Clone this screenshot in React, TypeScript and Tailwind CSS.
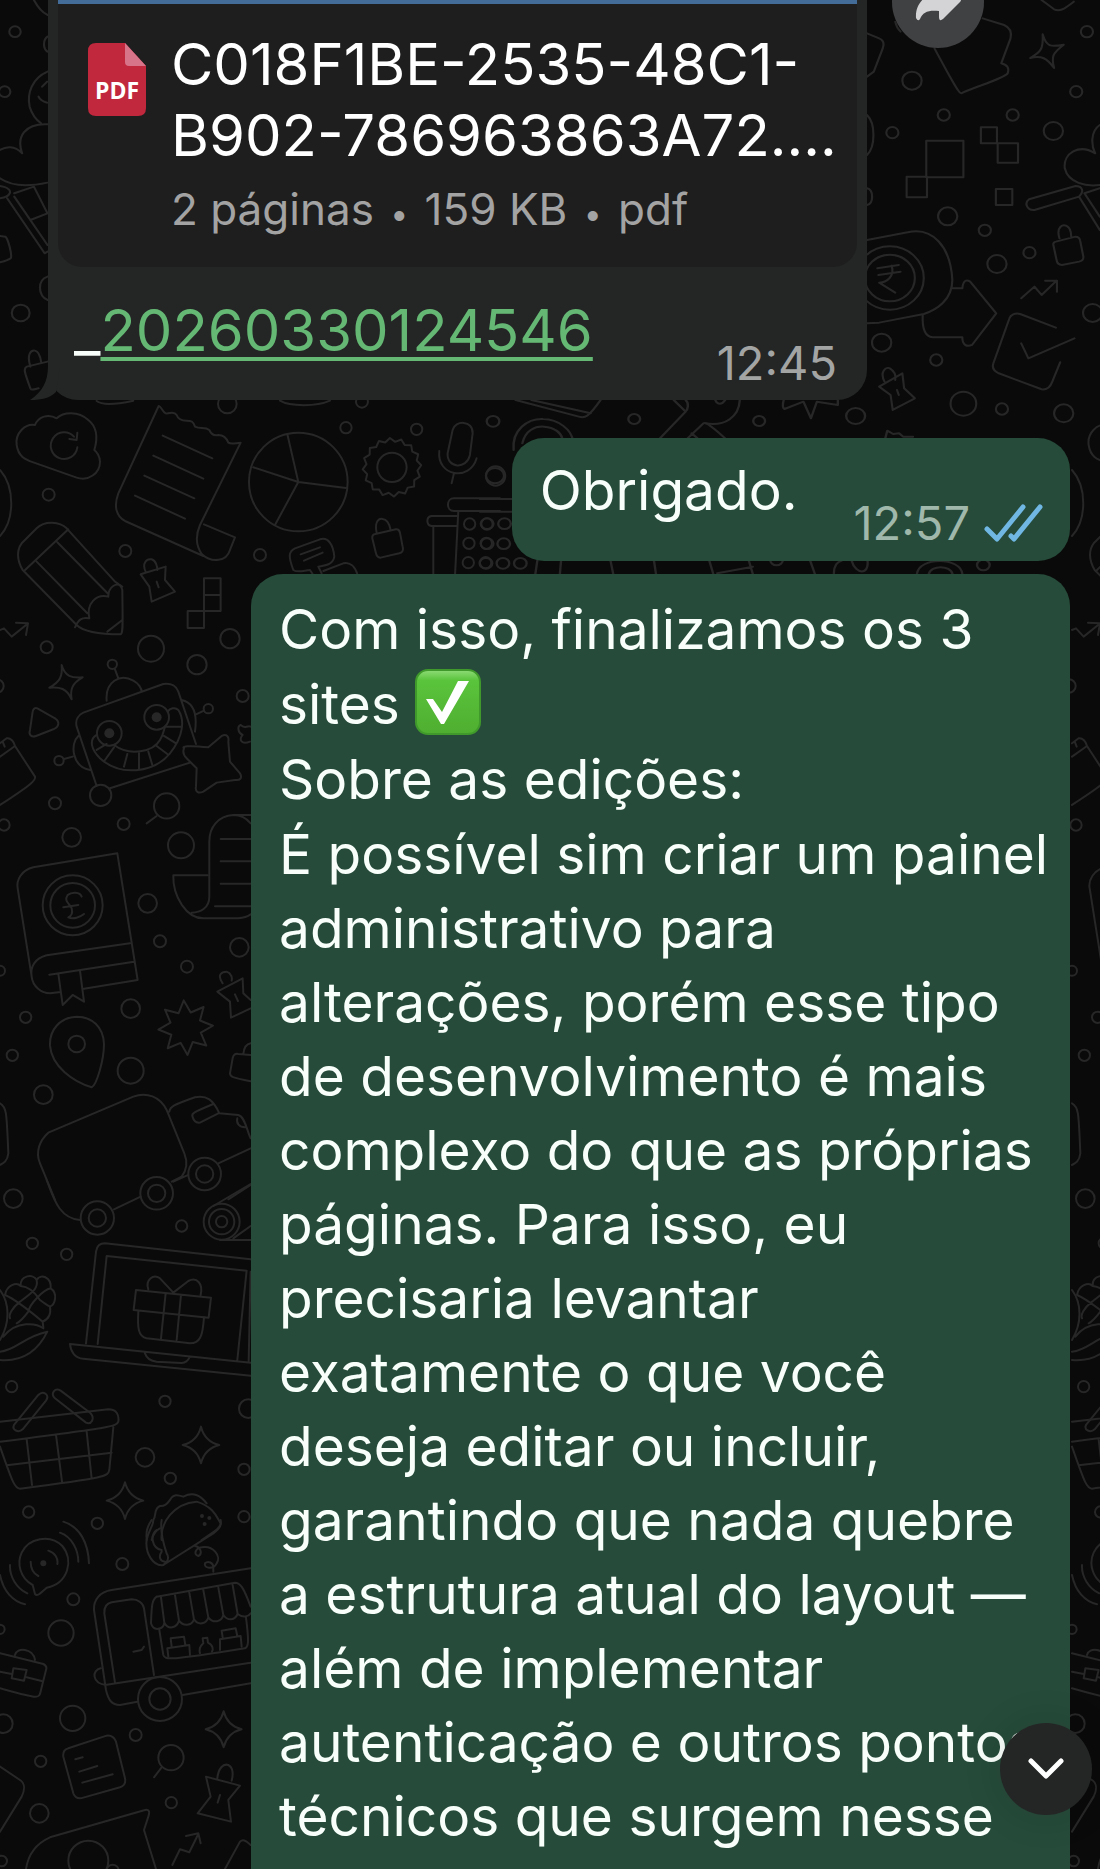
import * as React from 'react';

interface DoodleProps {
  x: number;
  y: number;
  sx: number;
  sy: number;
  circles: number[][];
  paths: string[];
  dots?: number[][];
}

const sparkle = (x: number, y: number, r: number) => {
  const k = r * 0.2;
  return `M${x} ${y - r}Q${x + k} ${y - k} ${x + r} ${y}Q${x + k} ${y + k} ${x} ${y + r}Q${x - k} ${y + k} ${x - r} ${y}Q${x - k} ${y - k} ${x} ${y - r}Z`;
};

const burst = (x: number, y: number, outer: number, inner: number, points: number) => {
  const list: string[] = [];
  for (let i = 0; i < points * 2; i++) {
    const r = i % 2 === 0 ? outer : inner;
    const a = (Math.PI * i) / points - Math.PI / 2 - 0.07;
    list.push(`${(x + r * Math.cos(a)).toFixed(1)} ${(y + r * Math.sin(a)).toFixed(1)}`);
  }
  return `M${list.join('L')}Z`;
};

// people, hearts and pencils next to the received message
const TOP_LEFT: DoodleProps = {
  x: 0,
  y: 0,
  sx: 0.357,
  sy: 0.3333,
  circles: [[42, 95, 16], [13, 275, 16], [58, 939, 25]],
  paths: [
    'M133 215C90 235 75 280 83 320C90 345 105 362 115 370M133 110C120 120 120 145 133 155M118 260L132 245M108 290C112 300 120 305 132 308',
    'M133 373C70 370 45 410 62 460C40 435 15 440 0 450M0 535C30 558 80 560 133 548',
    'M0 595C30 590 40 570 10 560L0 558M20 595L125 760L133 755M40 590L133 735M40 580L95 560L133 640M85 660L133 640',
    'M133 830C105 840 105 885 133 900M0 708L15 710C22 715 35 765 30 775C25 780 15 783 0 787',
    'M133 1085L75 1100C65 1105 68 1115 85 1165C88 1172 95 1168 108 1165M85 1100C75 1065 85 1050 98 1052C110 1055 113 1070 115 1085M95 0C105 20 115 35 133 45',
  ],
};

const TOP_RIGHT: DoodleProps = {
  x: 540,
  y: 0,
  sx: 0.357,
  sy: 0.3333,
  circles: [
    [987, 398, 17], [1042, 242, 27], [1131, 345, 17], [1324, 345, 17], [1438, 393, 27], [1142, 649, 27],
    [1246, 691, 17], [1280, 792, 27], [1371, 758, 17], [1532, 95, 17], [1502, 275, 17], [1548, 939, 27],
    [957, 1028, 27], [1110, 1080, 17], [1186, 1211, 36], [1294, 1227, 17], [1467, 1240, 27],
    [980, 834, 95], [980, 834, 70],
  ],
  paths: [
    'M1082 422H1186V532H1082ZM1235 382H1280V430H1235ZM1282 430H1339V488H1282ZM1027 530H1084V592H1027ZM1277 567H1323V615H1277Z',
    'M1240 55L1300 75C1315 82 1322 95 1318 115L1292 190C1310 195 1315 205 1310 220C1300 235 1220 260 1180 280C1175 280 1170 275 1105 145M995 65C998 80 1000 85 1010 95',
    'M1408 103C1418 140 1430 142 1467 134C1435 160 1432 170 1440 204C1420 175 1405 165 1373 174C1405 155 1410 145 1408 103Z',
    'M1405 0L1440 28C1455 35 1465 30 1495 5M916 100L950 115C962 120 965 130 960 145L935 215L916 230',
    'M916 345C940 370 940 440 916 465M916 565C935 570 935 610 916 615',
    'M916 720L1030 697C1100 680 1150 740 1155 840C1155 900 1110 930 1075 942L950 968L916 970',
    'M945 805L1005 795M948 825L1010 815M985 797C995 830 970 848 950 848L995 878',
    'M1155 865H1183C1185 840 1195 838 1205 845L1278 940L1210 1035C1195 1042 1183 1035 1183 1012H1100C1080 1010 1070 990 1072 945',
    'M1348 895L1385 860L1405 885L1447 842M1415 842H1448V875',
    'M1445 983L1345 942C1330 938 1318 945 1315 955L1270 1090C1265 1105 1275 1115 1285 1120L1405 1168C1420 1170 1430 1160 1435 1145L1457 1087M1348 1030L1368 1075L1497 1015',
    'M1455 715C1445 680 1465 672 1475 678C1488 685 1488 700 1488 710M1445 725L1500 710C1510 710 1512 715 1513 722L1522 770C1523 780 1518 783 1510 785L1462 795C1450 795 1448 788 1447 780L1438 735C1437 728 1440 726 1445 725Z',
    'M1370 598L1500 558C1520 558 1525 575 1510 590L1385 630C1365 632 1355 610 1370 598ZM1510 590L1568 690M1525 580L1568 650M1525 580L1568 565',
    'M1568 375C1540 395 1545 440 1555 460C1510 430 1465 460 1470 505C1480 550 1530 560 1568 555',
    'M965 1145C950 1115 970 1100 980 1105C995 1115 997 1130 995 1140M950 1160L1015 1120L1020 1165L1050 1195L988 1230L982 1185ZM1000 1170L1005 1185',
  ],
};

// strip between the received message and the replies
const GAP: DoodleProps = {
  x: 480,
  y: 390,
  sx: 0.3954,
  sy: 0.3333,
  circles: [
    [33, 94, 16], [390, 87, 15], [706, 93, 15], [950, 78, 24], [38, 257, 23], [18, 401, 16], [62, 401, 16],
    [18, 461, 16], [60, 461, 16], [15, 520, 16], [58, 520, 16], [102, 520, 16], [1273, 525, 16], [750, 510, 16],
  ],
  paths: [
    'M85 180C80 120 120 85 160 87C200 88 230 120 235 150M107 160C115 120 140 108 162 110C190 112 205 130 208 145',
    'M90 30L250 80C265 85 272 85 305 30M130 30L280 70M490 30L520 65L455 145M520 30C530 40 525 60 520 65M525 145L565 100C570 97 575 98 620 145M535 130L550 145',
    'M570 100C620 110 655 80 657 30M595 30C600 45 612 45 620 30M768 30C765 45 765 55 770 57L818 35L837 85L852 35L905 45V30M1025 145L1030 122L1045 132L1060 130L1070 140H1095',
    'M0 327H82M0 365H82M145 512L140 552M205 512L202 552M330 512L337 552M440 512L445 552M580 512L590 552M690 552L680 512M600 550L690 530M835 512L847 552M895 550C895 525 905 515 915 512M940 512C950 555 985 555 980 512M1105 552C1110 500 1215 500 1220 552M1135 552C1140 525 1190 525 1195 552',
  ],
};

const ROBOT: DoodleProps = {
  x: 0,
  y: 390,
  sx: 0.3333,
  sy: 0.3333,
  circles: [
    [146, 314, 18], [376, 483, 18], [780, 495, 18], [140, 772, 18], [453, 776, 39], [690, 746, 29], [591, 824, 29],
    [728, 918, 18], [1038, 113, 17], [1250, 118, 17], [1487, 258, 29], [682, 42, 28], [1086, 35, 18], [165, 1240, 18],
    [500, 1248, 38], [-9, 888, 20], [895, 276, 148], [1176, 232, 44], [1409, 402, 17], [1461, 402, 17],
    [1407, 460, 17], [1459, 460, 17], [1405, 518, 17], [1457, 518, 17], [337, 823, 14], [177, 1112, 14],
    [625, 956, 14], [328, 1030, 37], [470, 982, 37], [302, 1216, 32],
  ],
  dots: [[328, 1030, 15], [470, 982, 15]],
  paths: [
    'M105 105C75 100 45 130 50 165C55 200 75 208 100 217L230 263C265 275 300 250 300 215C300 200 290 185 283 180C295 140 290 110 265 90C235 62 190 65 170 85C145 70 115 80 105 105Z',
    'M232 172A40 40 0 1 1 222 140M232 128L230 150L208 147',
    'M0 240C45 290 45 390 0 438',
    'M476 48L355 310C340 350 350 380 375 393L610 498M476 48C485 50 487 65 497 70C510 72 522 62 530 75C535 90 550 92 560 92C575 92 580 95 585 110C600 118 615 110 628 120C635 135 645 138 655 135C670 135 680 145 685 158C695 165 710 158 722 158L600 405C585 440 590 470 605 492C635 520 680 515 690 480L705 442L612 403',
    'M488 137L637 205M460 197L610 266M433 257L583 325M405 317L555 386',
    'M895 276L862 132M895 276L760 232M895 276L825 405M895 276L1038 294',
    burst(1176, 232, 88, 77, 16),
    'M1358 120C1365 90 1420 90 1418 130L1410 195C1400 240 1340 235 1343 190ZM1318 183C1310 260 1410 275 1430 205M1362 250L1355 280',
    'M1500 325H1362C1338 325 1338 363 1362 363H1500M1300 410V560M1375 364L1365 560M1370 378H1295C1278 380 1278 406 1295 408H1370',
    'M1126 432L1188 418C1195 417 1198 420 1200 428L1209 475C1210 484 1205 488 1198 490L1142 503C1132 504 1130 498 1128 490L1117 445C1116 436 1120 433 1126 432ZM1130 428C1122 390 1140 385 1148 387C1165 388 1170 410 1172 420',
    'M880 540C865 500 865 485 885 475L960 448C985 440 1000 465 1003 500C1000 520 985 525 955 530L965 550M902 493L960 472M912 512L968 488M970 543L1030 520C1050 515 1065 530 1072 552M880 540C895 550 915 540 930 540L938 552',
    'M200 415C180 395 135 390 110 415L65 460C50 480 50 510 68 540L230 705C250 725 300 733 362 733C370 730 368 700 367 600C365 590 358 582 345 575ZM72 543L205 418M110 515L262 670M172 457L325 612M367 590C350 575 325 590 325 620C290 610 258 640 268 685C245 680 235 690 225 712M367 690L322 725',
    'M437 545C425 520 440 505 455 508C468 512 472 530 472 540M422 553L497 530L495 570L525 605L455 635L448 590ZM470 575L476 592',
    'M612 565H662V663H612ZM612 615H662M563 663H612V714H563Z',
    'M0 720L12 715L35 740L82 702M48 698L84 700L78 735',
    'M185 825C195 860 215 865 248 862C215 880 210 900 215 928C200 895 180 890 148 893C180 875 188 860 185 825Z',
    'M112 955L165 985C180 995 178 1010 160 1018L108 1038C95 1043 85 1035 90 1020L98 965C100 955 106 952 112 955Z',
    'M345 838L355 865M320 932C315 875 360 850 400 872C415 880 425 895 425 905M192 1107L218 1100M235 1038C210 1060 215 1130 270 1140M545 930C590 940 590 990 585 1025M585 975L612 962M290 1188L230 1010C225 990 235 975 250 968L490 882C515 878 530 890 535 905L588 1062M330 1195L570 1118',
    'M290 1035C265 1050 275 1080 300 1105C360 1160 460 1150 510 1090C550 1040 555 990 535 960C525 950 510 955 503 965M342 1065C390 1100 460 1085 480 1050C490 1035 492 1020 495 1010M290 1080L320 1062M315 1110L342 1072M372 1130L382 1092M417 1138V1090M457 1125L445 1085M502 1092L470 1068M528 1060L492 1038M545 1010H497',
    'M552 1075C545 1070 560 1065 625 1072L665 1038C680 1030 688 1040 685 1055L690 1115L720 1150C728 1165 720 1172 705 1170L650 1178L610 1205C595 1212 585 1205 588 1190L590 1135L560 1105C550 1095 548 1085 552 1075Z',
    'M752 1010C740 1005 735 1020 722 1005C710 1010 715 1030 728 1035C715 1050 725 1065 750 1055',
    'M0 1060L20 1045C32 1043 42 1055 45 1068L105 1160C108 1170 100 1180 0 1245M0 1100L45 1068M8 1055L14 1070',
    'M290 33C305 45 340 45 400 32M840 32C870 50 950 50 990 32',
  ],
};

const BOOK: DoodleProps = {
  x: 0,
  y: 780,
  sx: 0.3333,
  sy: 0.3333,
  circles: [
    [12, 135, 17], [215, 172, 28], [371, 132, 18], [543, 196, 39], [443, 370, 28], [480, 484, 18], [561, 560, 18],
    [718, 502, 28], [77, 712, 17], [392, 686, 28], [37, 826, 17], [392, 872, 39], [130, 944, 28], [230, 792, 25],
    [0, 572, 15], [40, 1256, 28], [218, 376, 90], [218, 376, 67], [614, 1182, 49], [614, 1182, 26],
    [470, 1240, 49], [470, 1240, 26],
  ],
  paths: [
    'M470 108L440 130',
    'M752 105H700C655 108 628 140 628 185V350C628 385 600 398 575 398M752 130C740 115 720 105 700 105M622 286H520C518 350 560 415 610 415H715C735 413 745 408 752 403M662 177H752M662 244H752M662 311H752M645 379H752',
    'M182 636L150 640C125 640 98 620 95 590L53 325C48 300 65 270 100 262L352 220L413 600L252 626M390 490L140 526C105 535 90 560 95 590M148 584L402 545M175 582L188 675L218 645L252 665L240 572',
    'M245 350C240 335 215 335 203 345C190 365 210 370 215 385C220 405 210 410 205 412C220 418 240 412 252 402M190 382L235 375',
    'M275 922C290 915 312 840 312 792C310 740 275 710 230 710C180 712 148 750 150 797C155 860 220 905 275 922Z',
    burst(557, 743, 82, 48, 8),
    'M668 610C650 585 665 575 680 575C695 580 697 595 695 602M752 660L730 640L728 595L652 635L690 665L693 713L752 685M705 643L714 663',
    'M752 825L715 822C705 820 700 825 698 835L690 880C690 890 695 893 752 904M730 822C732 800 740 792 752 790',
    'M165 1260L120 1150C105 1115 120 1080 145 1058L400 950C440 935 480 950 500 990L553 1120C565 1150 560 1170 545 1190L515 1205M508 995C510 980 520 975 585 952C620 945 640 960 658 1000L715 1005C735 1010 740 1050 752 1075M752 1105L655 1150M655 1000L600 1028C585 1030 580 1020 577 1008C575 1000 580 997 640 972M712 1015C708 1030 718 1042 735 1042M520 1205L565 1185M685 1258L752 1215',
    'M0 970C20 980 20 1000 25 1120C22 1145 10 1150 0 1155',
  ],
};

const LAPTOP: DoodleProps = {
  x: 0,
  y: 1180,
  sx: 0.3333,
  sy: 0.3333,
  circles: [
    [292, 114, 50], [292, 114, 26], [545, 138, 17], [665, 125, 54], [665, 125, 38], [665, 125, 17], [97, 190, 17],
    [200, 223, 17], [35, 620, 17], [495, 664, 17], [435, 832, 28], [511, 895, 17], [732, 868, 17], [732, 1010, 17],
    [86, 996, 17], [292, 1030, 17], [745, 686, 28],
  ],
  dots: [[606, 1008, 6], [628, 1014, 6], [614, 1032, 6]],
  paths: [
    'M140 0C160 50 175 115 240 120M342 88L422 50M660 180H752M640 78L752 12M700 175L752 138',
    'M752 238L315 190C298 190 290 200 288 215L258 490M293 492L320 228L740 272L712 540M752 275L746 545M752 548L210 492C212 515 225 535 250 536L752 587M435 520C440 535 450 543 470 545L545 549C558 548 565 540 568 533',
    'M408 330L633 353L626 413L401 390ZM415 395C412 445 415 470 440 475L570 490C600 490 608 470 612 412M497 340L483 475M543 345L530 480M520 338L480 295C460 280 435 300 445 328M520 338L565 303C590 290 610 310 602 345',
    'M0 330C30 370 30 430 0 480M0 515C50 510 70 470 142 455C110 520 60 545 0 540M10 470C50 420 110 430 130 445',
    'M15 345C20 315 50 305 62 318C60 285 100 280 110 300C120 280 155 290 152 325C175 340 165 375 150 380C155 410 140 420 128 425L130 442M62 318C90 320 110 345 120 360C140 375 150 380 150 380M110 300C115 325 100 335 60 365C35 385 25 405 30 415M152 325C130 330 90 370 85 395C70 415 60 425 50 430M15 345C40 355 80 385 128 425',
    'M0 725L325 688C350 688 358 705 355 725C350 740 335 742 0 785M340 742L328 870C325 890 315 893 60 926C45 925 40 915 0 800M20 856L335 818M80 778L96 915M168 765L186 905M260 755L275 895',
    'M42 735L115 645C130 630 150 645 138 662L68 748C55 760 35 750 42 735ZM165 655C150 640 165 622 182 632L272 700C285 715 275 735 258 728Z',
    sparkle(603, 795, 55),
    sparkle(375, 962, 55),
    'M485 1080C480 1030 520 970 590 965C640 980 650 1010 662 1030C660 1045 650 1050 605 1080M440 1080C445 1050 460 1040 460 1020C470 1010 460 985 480 978C500 980 505 965 510 960C520 940 535 945 550 950C580 935 600 945 620 970M455 1080C460 1060 470 1050 480 1045',
  ],
};

const FOOD_TRUCK: DoodleProps = {
  x: 0,
  y: 1520,
  sx: 0.3333,
  sy: 0.3333,
  circles: [
    [367, 132, 18], [220, 238, 18], [183, 339, 38], [218, 595, 38], [407, 645, 18], [122, 724, 17], [118, 880, 28],
    [514, 848, 17], [513, 713, 38], [480, 537, 66], [480, 537, 32], [10, 611, 28], [0, 328, 14], [5, 1023, 16],
    [265, 1022, 60], [338, 1052, 18],
  ],
  dots: [[130, 130, 9]],
  paths: [
    'M98 195C60 175 50 130 65 98C85 55 150 40 187 78C222 120 205 190 140 203C118 222 112 230 105 222Z',
    'M190 5C240 20 265 70 267 130M180 38C215 50 235 90 235 125M30 135C28 170 50 205 82 220M0 165C10 215 40 245 75 253M145 92C165 98 175 115 172 132M92 125C92 145 100 160 115 168',
    'M440 60C435 100 460 140 490 135L640 40C660 25 665 15 662 0M485 0C480 30 490 70 500 100C510 115 500 130 490 135M455 0C435 30 440 45 440 60M470 30C450 45 455 85 485 90M485 95C475 110 480 125 495 125',
    'M752 145L335 210C300 215 280 240 282 270L318 510C325 540 335 555 360 555L412 545M548 525L752 490M315 495L752 428M345 488L313 280C312 260 320 250 335 247L395 238C415 238 430 250 432 265L462 465M400 395L425 390L432 380M302 445C275 450 275 490 318 495M640 155V140',
    'M470 230L705 188C720 188 730 200 752 260M470 230C455 240 455 260 453 310C460 335 490 330 493 308C505 330 530 325 537 302C550 320 575 318 582 298C595 318 620 312 625 292C640 312 665 305 670 285C685 305 705 300 713 282C730 295 745 290 752 280M483 232L493 308M525 225L537 302M568 218L582 298M610 210L625 292M655 203L670 285M698 195L713 282M478 330L490 405C495 420 505 422 735 385C745 380 748 370 738 292',
    'M505 410L502 385L568 375L570 405M515 380L512 355L552 350L556 375M600 400C595 380 605 375 610 370L608 355L622 353L624 368C640 375 640 390 636 395M660 390V358L722 348L725 380M668 352L665 332L707 325L712 348',
    'M585 78C600 80 610 100 595 108C580 105 585 85 605 82C640 75 665 110 650 130C640 150 610 145 615 130C625 120 640 130 640 140',
    'M0 400L130 432C140 437 140 445 138 450L120 522C115 535 105 535 0 505M0 455L35 462M80 472L125 483M45 405C50 380 100 385 105 420M40 445L80 450L72 482L35 475Z',
    'M205 685L320 647C335 645 345 655 348 665L375 775C378 790 372 798 360 802L250 833C235 838 225 832 220 820L190 710C188 695 195 688 205 685M226 718L248 712M238 755L292 738M247 788L338 763',
    'M485 742L462 772',
    sparkle(671, 628, 54),
    'M652 775C655 745 670 730 685 735C700 742 700 765 695 782M618 770L720 797L685 840L693 905L593 880L632 830ZM660 825L653 848',
    'M517 1035L540 988L568 997L595 942M558 948L595 940L602 970',
    'M0 740L60 780C75 790 75 810 65 830L0 935',
    'M78 1047C85 1000 110 970 150 952L435 870C448 868 450 875 445 890L432 930L468 1047M675 1047L720 965C728 958 735 960 752 975',
  ],
};

function Doodles({ x, y, sx, sy, circles, paths, dots = [] }: DoodleProps) {
  return (
    <g transform={`translate(${x} ${y}) scale(${sx} ${sy})`}>
      {circles.map(([cx, cy, r], i) => (
        <circle key={i} cx={cx} cy={cy} r={r} />
      ))}
      {dots.map(([cx, cy, r], i) => (
        <circle key={i} cx={cx} cy={cy} r={r} fill="#272727" stroke="none" />
      ))}
      {paths.map((d, i) => (
        <path key={i} d={d} />
      ))}
    </g>
  );
}

function Wallpaper() {
  return (
    <svg
      aria-hidden="true"
      viewBox="0 0 1100 1869"
      preserveAspectRatio="xMinYMin slice"
      className="absolute inset-0 h-full w-full"
      fill="none"
      stroke="#272727"
      strokeWidth="6"
      strokeLinecap="round"
      strokeLinejoin="round"
    >
      <Doodles {...TOP_LEFT} />
      <Doodles {...TOP_RIGHT} />
      <Doodles {...GAP} />
      {/* the pattern repeats every 1072 units */}
      {[0, 1072].map((offset) => (
        <g key={offset} transform={`translate(${offset} 0)`}>
          <Doodles {...ROBOT} />
          <Doodles {...BOOK} />
          <Doodles {...LAPTOP} />
          <Doodles {...FOOD_TRUCK} />
        </g>
      ))}
    </svg>
  );
}

function PdfIcon() {
  return (
    <svg viewBox="0 0 60 75" className="h-[75px] w-[60px] shrink-0" role="img" aria-label="PDF">
      <path d="M9 1H38L59 24V66Q59 74 51 74H9Q1 74 1 66V9Q1 1 9 1Z" fill="#c1283d" />
      <path d="M38 1L59 24H42Q38 24 38 20Z" fill="#d8748a" />
      <text x="30" y="57" textAnchor="middle" fill="#fff" className="font-['Open_Sans',sans-serif] text-[23px] font-bold">
        PDF
      </text>
    </svg>
  );
}

function ReadTicks() {
  return (
    <svg viewBox="0 0 60 40" className="h-[40px] w-[60px]" fill="none" stroke="#70b7e4" strokeWidth="5" strokeLinecap="round" strokeLinejoin="round" role="img" aria-label="Lida">
      <path d="M3 26L13 36L39 4" />
      <path d="M27 33L30 36L56 4" />
    </svg>
  );
}

function CheckEmoji() {
  return (
    <svg viewBox="0 0 66 66" className="inline-block h-[66px] w-[66px] align-[-11px]" role="img" aria-label="✅">
      <defs>
        <linearGradient id="emoji-face" x1="0" y1="0" x2="0" y2="1">
          <stop offset="0" stopColor="#8fdc78" />
          <stop offset="0.16" stopColor="#5ac43c" />
          <stop offset="1" stopColor="#4fae30" />
        </linearGradient>
      </defs>
      <rect x="1" y="1" width="64" height="64" rx="12" fill="url(#emoji-face)" stroke="#3f9a2b" strokeWidth="2" />
      <path d="M11 30H18L27 43L43 12H54L29 55H26Z" fill="#fff" />
    </svg>
  );
}

function Bullet() {
  return <span className="mx-1 text-[32px] leading-none">•</span>;
}

const MESSAGE = `É possível sim criar um painel
administrativo para
alterações, porém esse tipo
de desenvolvimento é mais
complexo do que as próprias
páginas. Para isso, eu
precisaria levantar
exatamente o que você
deseja editar ou incluir,
garantindo que nada quebre
a estrutura atual do layout —
além de implementar
autenticação e outros pontos
técnicos que surgem nesse`;

export default function App() {
  return (
    <div className="relative flex min-h-screen flex-col overflow-hidden bg-[#0a0a0a] font-['Inter',sans-serif] text-[55px] text-[#f8fffb]">
      <Wallpaper />

      <main className="relative flex flex-1 flex-col pr-[30px] pl-[48px]">
        <div className="flex items-start">
          <article className="relative w-[819px] rounded-b-[30px] bg-[#242626] px-[10px] pb-[9px] text-[58px]">
            <svg viewBox="0 0 30 34" className="absolute bottom-0 -left-[18px] h-[34px] w-[30px]" aria-hidden="true">
              <path d="M18 0C18 16 12 26 0 34C12 34 20 32 26 26L30 0Z" fill="#242626" />
            </svg>
            <div className="rounded-b-[24px] bg-[#1e1e1e]">
              <div className="h-1 bg-[#446c99]" />
              <div className="flex gap-[24px] pt-[25px] pr-[24px] pb-[30px] pl-[29px]">
                <div className="pt-[13px]">
                  <PdfIcon />
                </div>
                <div className="whitespace-nowrap">
                  <h2 className="leading-[71px] text-white">
                    C018F1BE-2535-48C1-
                    <br />
                    B902-786963863A72....
                  </h2>
                  <p className="mt-[10px] text-[44px] leading-[56px] text-[#a3a3a3]">
                    2 páginas <Bullet /> 159 KB <Bullet /> pdf
                  </p>
                </div>
              </div>
            </div>
            <div className="flex items-start justify-between pt-[28px] pr-[20px] pl-[16px]">
              <p className="leading-[70px]">
                _
                <a href="tel:20260330124546" className="text-[#65b874] underline decoration-4 underline-offset-[6px]">
                  20260330124546
                </a>
              </p>
              <time className="mt-[40px] text-[47px] leading-[56px] text-[#a3a5a5]">12:45</time>
            </div>
          </article>
          <button
            type="button"
            aria-label="Encaminhar"
            className="-mt-[44px] ml-[25px] flex h-[92px] w-[92px] items-center justify-center rounded-full bg-[#404143]"
          >
            <svg viewBox="0 0 46 40" className="h-[40px] w-[46px]" fill="#d4d4d6" aria-hidden="true">
              <path d="M26 3Q26 0 29 2L45 16Q47 18 45 20L28 37Q24 40 24 35V29C13 28 8 30 5 37Q3 40 1 36C0 22 10 11 26 10Z" />
            </svg>
          </button>
        </div>

        <article className="mt-[38px] flex items-start gap-[56px] self-end rounded-[32px] bg-[#264b3a] pt-[15px] pr-[26px] pb-[10px] pl-[28px]">
          <p className="leading-[74px]">Obrigado.</p>
          <div className="mt-[42px] flex items-center gap-[14px]">
            <time className="text-[47px] leading-[56px] text-[#9fb8ab]">12:57</time>
            <ReadTicks />
          </div>
        </article>

        <article className="mt-[13px] w-[819px] flex-1 self-end rounded-t-[32px] bg-[#264b3a] pt-[18px] pr-[20px] pl-[28px]">
          <p className="leading-[75px]">
            Com isso, finalizamos os 3
            <br />
            sites <CheckEmoji />
          </p>
          <p className="leading-[75px]">Sobre as edições:</p>
          <p className="leading-[74px] whitespace-pre">{MESSAGE}</p>
        </article>
      </main>

      <button
        type="button"
        aria-label="Ir para o fim"
        className="absolute right-[8px] bottom-[54px] flex h-[92px] w-[92px] items-center justify-center rounded-full bg-[#242626] shadow-[0_0_40px_rgba(0,0,0,0.12)]"
      >
        <svg viewBox="0 0 36 22" className="h-[22px] w-[36px]" fill="none" stroke="#fff" strokeWidth="5" strokeLinecap="round" strokeLinejoin="round" aria-hidden="true">
          <path d="M3 3L18 18L33 3" />
        </svg>
      </button>
    </div>
  );
}
